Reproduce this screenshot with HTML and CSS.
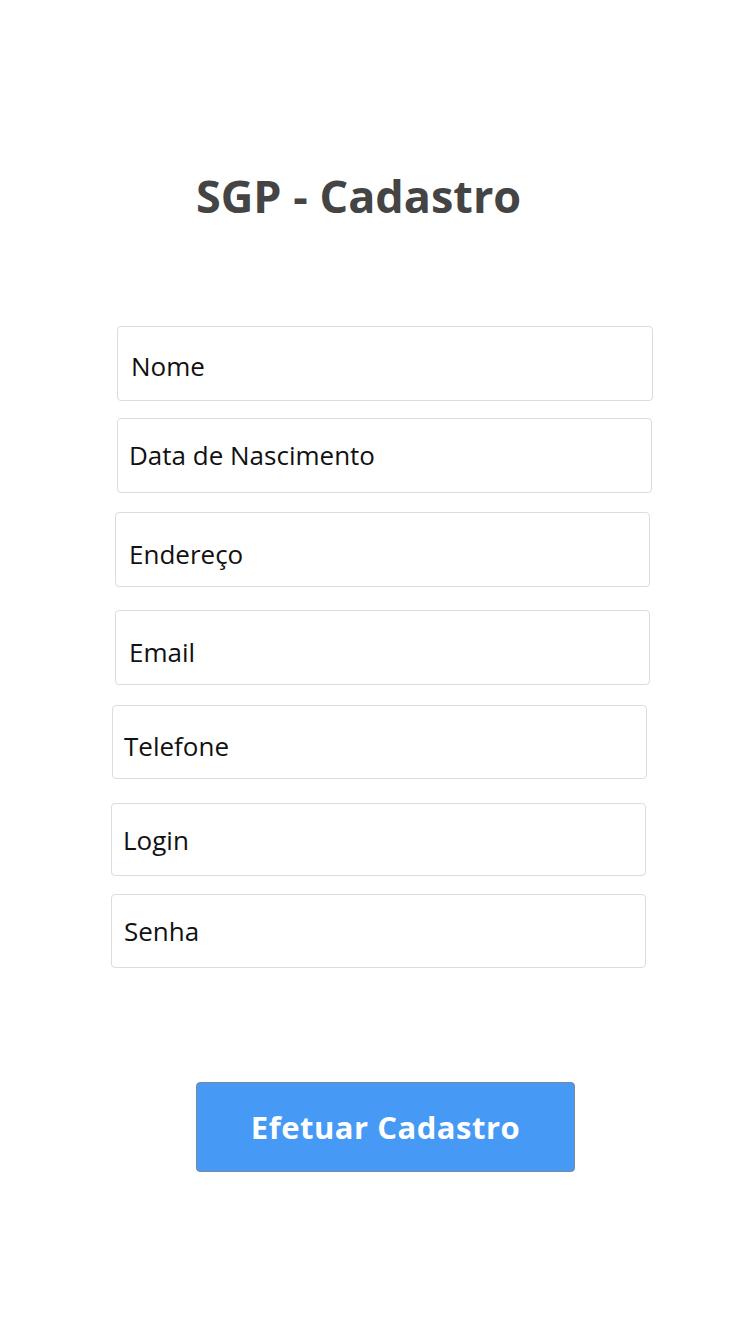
FILE: index.html
```html
<!DOCTYPE html>
<html lang="pt-BR">
<head>
<meta charset="utf-8">
<title>SGP - Cadastro</title>
<link rel="stylesheet" href="styles.css">
</head>
<body>
<main class="page">
  <h1 class="title">SGP - Cadastro</h1>
  <form class="form">
    <div class="field f-nome">Nome</div>
    <div class="field f-data">Data de Nascimento</div>
    <div class="field f-end">Endereço</div>
    <div class="field f-email">Email</div>
    <div class="field f-tel">Telefone</div>
    <div class="field f-login">Login</div>
    <div class="field f-senha">Senha</div>
  </form>
  <div class="actions">
    <button type="button" class="submit">Efetuar Cadastro</button>
  </div>
</main>
</body>
</html>
```
FILE: styles.css
```css
html, body {
  margin: 0;
  padding: 0;
  background: #ffffff;
}

body {
  font-family: "Open Sans", "Noto Sans", sans-serif;
  color: #111111;
}

.page {
  display: flex;
  flex-direction: column;
  padding-top: 165px;
}

.title {
  margin: 0;
  padding-left: 196px;
  font-size: 45px;
  line-height: 62px;
  font-weight: 700;
  color: #444444;
}

.form {
  display: flex;
  flex-direction: column;
  align-items: flex-start;
  margin: 99px 0 0 0;
}

.field {
  box-sizing: border-box;
  width: 536px;
  height: 75px;
  border: 1px solid #dcdcdc;
  border-radius: 4px;
  font-size: 26px;
  line-height: 36px;
  color: #111111;
  padding-left: 11px;
}

.f-nome  { margin-left: 117px; padding-top: 21px; padding-left: 13px; }
.f-data  { margin-left: 117px; margin-top: 17px; width: 535px; padding-top: 18px; padding-left: 11px; }
.f-end   { margin-left: 115px; margin-top: 19px; width: 535px; padding-top: 23px; padding-left: 13px; }
.f-email { margin-left: 115px; margin-top: 23px; width: 535px; padding-top: 23px; padding-left: 13px; }
.f-tel   { margin-left: 112px; margin-top: 20px; width: 535px; height: 74px; padding-top: 22px; }
.f-login { margin-left: 111px; margin-top: 24px; width: 535px; height: 73px; padding-top: 18px; padding-left: 11px; }
.f-senha { margin-left: 111px; margin-top: 18px; width: 535px; height: 74px; padding-top: 18px; padding-left: 12px; }

.actions {
  display: flex;
  padding-left: 196px;
  margin-top: 114px;
}

.submit {
  box-sizing: border-box;
  width: 379px;
  height: 90px;
  background: #4699f5;
  border: 1px solid #7d8a98;
  border-radius: 4px;
  color: #ffffff;
  font-family: "Open Sans", "Noto Sans", sans-serif;
  font-size: 31px;
  font-weight: 700;
  letter-spacing: 0.5px;
  padding: 0;
  cursor: pointer;
}
```
